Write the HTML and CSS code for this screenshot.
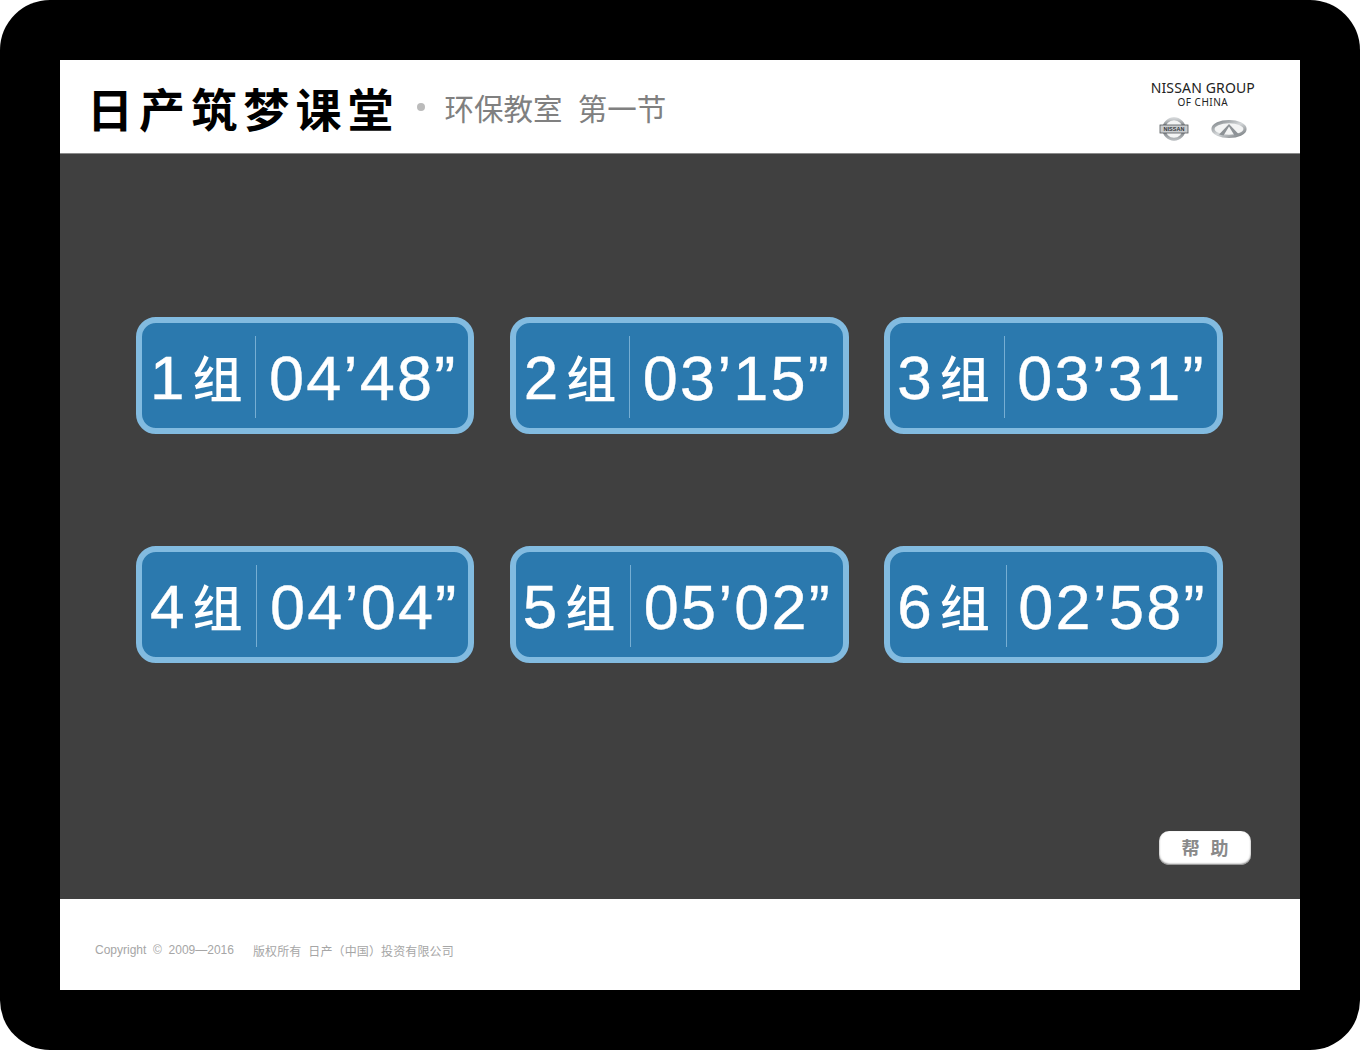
FILE: index.html
```html
<!doctype html>
<html lang="zh-CN">
  <head>
    <meta charset="UTF-8" />
    <meta name="viewport" content="width=device-width, initial-scale=1.0" />
    <title>日产筑梦课堂</title>
    <link rel="stylesheet" href="styles.css">
  </head>
  <body>
    <div class="frame">
      <div class="screen">
        <div class="top">
          <h1 class="title">日产筑梦课堂</h1>
          <i class="dot"></i>
          <span class="sub">环保教室</span>
          <span class="sub sub2">第一节</span>
          <div class="brand">
            <div class="brand1">NISSAN GROUP</div>
            <div class="brand2">OF CHINA</div>
            <div class="logos">
              <svg width="30" height="26" viewBox="0 0 30 26">
                <defs>
                  <linearGradient id="ring" x1="0" y1="0" x2="0" y2="1">
                    <stop offset="0" stop-color="#d0d3d5" />
                    <stop offset="0.45" stop-color="#5f6468" />
                    <stop offset="1" stop-color="#b5b9bc" />
                  </linearGradient>
                </defs>
                <circle cx="15" cy="13" r="10.2" fill="#f4f5f5" stroke="url(#ring)" stroke-width="3" />
                <rect x="1" y="9" width="28" height="8" fill="#c9ccce" stroke="#55595d" stroke-width="0.8" />
                <text x="15" y="15.2" class="nissan-txt" text-anchor="middle">NISSAN</text>
              </svg>
              <svg width="36" height="20" viewBox="0 0 36 20">
                <defs>
                  <linearGradient id="oval" x1="0" y1="0" x2="1" y2="1">
                    <stop offset="0" stop-color="#7f8589" />
                    <stop offset="0.5" stop-color="#d4d7d9" />
                    <stop offset="1" stop-color="#74797d" />
                  </linearGradient>
                </defs>
                <ellipse cx="18" cy="10" rx="16" ry="7.4" fill="#f3f4f4" stroke="url(#oval)" stroke-width="3.2" />
                <path d="M18 5 L8 15.5 L12.5 16.6 L18 7.5 L23.5 16.6 L28 15.5 Z" fill="#8d9296" />
              </svg>
            </div>
          </div>
        </div>

        <div class="main">
          <div class="cards">
            <div class="card">
              <div class="zu"><span class="num">1</span><span class="zi">组</span></div>
              <div class="time">04’48”</div>
            </div>
            <div class="card">
              <div class="zu"><span class="num">2</span><span class="zi">组</span></div>
              <div class="time">03’15”</div>
            </div>
            <div class="card">
              <div class="zu"><span class="num">3</span><span class="zi">组</span></div>
              <div class="time">03’31”</div>
            </div>
            <div class="card">
              <div class="zu"><span class="num">4</span><span class="zi">组</span></div>
              <div class="time">04’04”</div>
            </div>
            <div class="card">
              <div class="zu"><span class="num">5</span><span class="zi">组</span></div>
              <div class="time">05’02”</div>
            </div>
            <div class="card">
              <div class="zu"><span class="num">6</span><span class="zi">组</span></div>
              <div class="time">02’58”</div>
            </div>
          </div>
          <div class="help">帮 助</div>
        </div>

        <div class="end">
          <span>Copyright &nbsp;©&nbsp; 2009—2016</span>
          <span class="owner">版权所有&nbsp; 日产（中国）投资有限公司</span>
        </div>
      </div>
    </div>
  </body>
</html>
```

FILE: styles.css
```css
* {
  padding: 0;
  margin: 0;
  box-sizing: border-box;
}
body {
  background-color: #fff;
  font-family: "Liberation Sans", "Noto Sans CJK SC", sans-serif;
}
.frame {
  width: 1360px;
  height: 1050px;
  padding: 60px;
  background-color: #000;
  border-radius: 50px;
}
.screen {
  height: 930px;
  display: flex;
  flex-direction: column;
  background-color: #fff;
}
.top {
  height: 94px;
  display: flex;
  align-items: center;
  padding-left: 27px;
  padding-right: 45px;
  border-bottom: 1px solid #8a8a8a;
}
.title {
  font-size: 46px;
  font-weight: 700;
  letter-spacing: 6.1px;
  color: #000;
}
.dot {
  width: 8px;
  height: 8px;
  margin-left: 17px;
  margin-right: 20px;
  border-radius: 50%;
  background-color: #bbb;
}
.sub {
  font-size: 29.5px;
  color: #808080;
}
.sub2 {
  margin-left: 15px;
}
.brand {
  margin-left: auto;
  padding-top: 9px;
  text-align: center;
  color: #222;
}
.brand1 {
  font-family: "Noto Sans", sans-serif;
  font-size: 14px;
  line-height: 15px;
  letter-spacing: 0.15px;
}
.brand2 {
  font-family: "Noto Sans", sans-serif;
  font-size: 10px;
  line-height: 14px;
  letter-spacing: 0.5px;
}
.logos {
  display: flex;
  justify-content: center;
  align-items: center;
  gap: 22px;
  height: 28px;
  margin-top: 6px;
}
.nissan-txt {
  font-size: 5.5px;
  font-weight: 700;
  fill: #33373a;
}
.main {
  flex: 1;
  position: relative;
  background-color: #404040;
}
.cards {
  display: grid;
  grid-template-columns: 338px 338.9px 338.9px;
  grid-auto-rows: 117px;
  column-gap: 35.7px;
  row-gap: 112px;
  padding-left: 76px;
  padding-top: 163px;
}
.card {
  display: flex;
  align-items: center;
  padding: 13px 0 10px;
  background-color: #2b79ae;
  border: 6px solid #82bbe0;
  border-radius: 20px;
  color: #fff;
}
.zu {
  width: 114px;
  height: 100%;
  display: flex;
  align-items: center;
  gap: 8px;
  padding-left: 8px;
  border-right: 1px solid #76aed3;
}
/* 每张卡的分隔线位置略有不同 */
.card:nth-child(3) .zu,
.card:nth-child(4) .zu,
.card:nth-child(5) .zu {
  width: 115px;
}
.card:nth-child(6) .zu {
  width: 117px;
}
.card:nth-child(3) .zu,
.card:nth-child(5) .zu,
.card:nth-child(6) .zu {
  padding-left: 7px;
}
.num {
  padding-top: 1px;
  font-size: 62px;
  -webkit-text-stroke: 0.4px #fff;
}
.zi {
  padding-bottom: 3px;
  font-size: 50px;
  font-weight: 500;
}
.time {
  padding-top: 1px;
  padding-left: 13px;
  font-size: 63px;
  letter-spacing: 2.2px;
  white-space: nowrap;
  -webkit-text-stroke: 0.4px #fff;
}
.card:nth-child(3) .time {
  padding-left: 12px;
}
.card:nth-child(6) .time {
  padding-left: 11px;
}
.help {
  position: absolute;
  right: 49px;
  bottom: 34px;
  width: 92px;
  height: 34px;
  padding-top: 1px;
  background-color: #fff;
  border-radius: 10px;
  box-shadow: inset 0 -1px 2px #777;
  color: #8a8a8a;
  font-size: 18px;
  font-weight: 700;
  line-height: 34px;
  text-align: center;
  word-spacing: 6px;
}
.end {
  height: 91px;
  display: flex;
  align-items: center;
  padding-left: 35px;
  padding-top: 11px;
  color: #a6a6a6;
  font-size: 12px;
}
.owner {
  margin-left: 19px;
  letter-spacing: 0.12px;
}
```
